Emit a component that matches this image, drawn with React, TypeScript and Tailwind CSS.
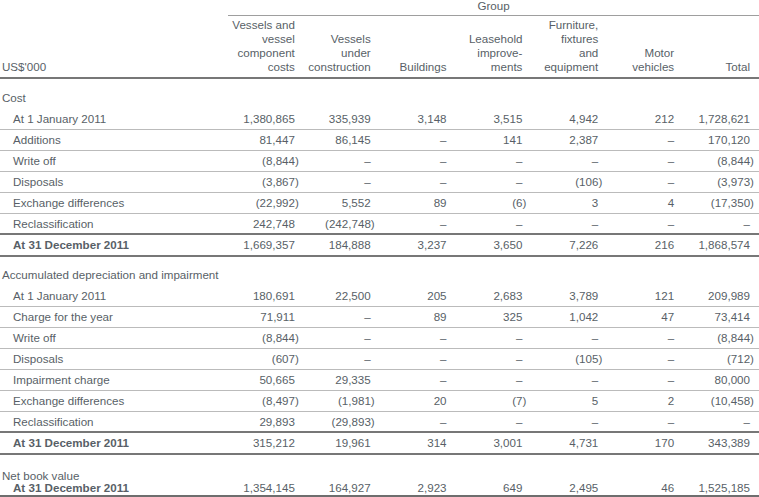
const grid = "grid grid-cols-[228px_repeat(7,minmax(0,1fr))]";

const cost: [string, string[]][] = [
  ["At 1 January 2011", ["1,380,865", "335,939", "3,148", "3,515", "4,942", "212", "1,728,621"]],
  ["Additions", ["81,447", "86,145", "–", "141", "2,387", "–", "170,120"]],
  ["Write off", ["(8,844)", "–", "–", "–", "–", "–", "(8,844)"]],
  ["Disposals", ["(3,867)", "–", "–", "–", "(106)", "–", "(3,973)"]],
  ["Exchange differences", ["(22,992)", "5,552", "89", "(6)", "3", "4", "(17,350)"]],
  ["Reclassification", ["242,748", "(242,748)", "–", "–", "–", "–", "–"]],
];
const costTotal = ["1,669,357", "184,888", "3,237", "3,650", "7,226", "216", "1,868,574"];

const depreciation: [string, string[]][] = [
  ["At 1 January 2011", ["180,691", "22,500", "205", "2,683", "3,789", "121", "209,989"]],
  ["Charge for the year", ["71,911", "–", "89", "325", "1,042", "47", "73,414"]],
  ["Write off", ["(8,844)", "–", "–", "–", "–", "–", "(8,844)"]],
  ["Disposals", ["(607)", "–", "–", "–", "(105)", "–", "(712)"]],
  ["Impairment charge", ["50,665", "29,335", "–", "–", "–", "–", "80,000"]],
  ["Exchange differences", ["(8,497)", "(1,981)", "20", "(7)", "5", "2", "(10,458)"]],
  ["Reclassification", ["29,893", "(29,893)", "–", "–", "–", "–", "–"]],
];
const depTotal = ["315,212", "19,961", "314", "3,001", "4,731", "170", "343,389"];

const nbv = ["1,354,145", "164,927", "2,923", "649", "2,495", "46", "1,525,185"];

const headers = [
  ["Vessels and", "vessel", "component", "costs"],
  ["Vessels", "under", "construction"],
  ["Buildings"],
  ["Leasehold", "improve-", "ments"],
  ["Furniture,", "fixtures", "and", "equipment"],
  ["Motor", "vehicles"],
  ["Total"],
];

function Num({ v }: { v: string }) {
  // closing bracket hangs past the column edge
  return <span className={v.startsWith("(") ? "-mr-[4px]" : ""}>{v}</span>;
}

function Values({ values }: { values: string[] }) {
  return (
    <>
      {values.map((v, i) => (
        <div key={i} className="text-right pr-[9px] whitespace-nowrap">
          <Num v={v} />
        </div>
      ))}
    </>
  );
}

function Row({ label, values, dark }: { label: string; values: string[]; dark?: boolean }) {
  return (
    <div
      className={`${grid} h-[21px] items-center ${
        dark ? "border-b-2 border-[#777777]" : "border-b border-[#bbbbbb]"
      }`}
    >
      <div className="pl-[13px]">{label}</div>
      <Values values={values} />
    </div>
  );
}

function TotalRow({ values }: { values: string[] }) {
  return (
    <div className={`${grid} h-[22px] items-center border-b-2 border-[#777777]`}>
      <div className="pl-[13px] font-bold">At 31 December 2011</div>
      <Values values={values} />
    </div>
  );
}

export default function App() {
  return (
    <div className="w-[759px] h-[497px] overflow-hidden bg-white text-[#585f67] text-[11.6px] leading-[14px] font-['Liberation_Sans',Arial,sans-serif]">
      <div className={`${grid} h-[16px]`}>
        <div />
        <div className="col-span-7 border-b border-[#9e9e9e] text-center leading-[11px]">Group</div>
      </div>
      <div className={`${grid} h-[63px] items-end pb-[3px] border-b-2 border-[#777777]`}>
        <div className="pl-[2px]">US$'000</div>
        {headers.map((lines, i) => (
          <div key={i} className="text-right pr-[9px] whitespace-nowrap">
            {lines.map((l, j) => (
              <div key={j}>{l}</div>
            ))}
          </div>
        ))}
      </div>

      <div className="h-[30px] flex items-end pb-[4px] pl-[2px]">Cost</div>
      {cost.map(([label, values], i) => (
        <Row key={i} label={label} values={values} dark={i === cost.length - 1} />
      ))}
      <TotalRow values={costTotal} />

      <div className="h-[29px] flex items-end pb-[4px] pl-[2px]">Accumulated depreciation and impairment</div>
      {depreciation.map(([label, values], i) => (
        <Row key={i} label={label} values={values} dark={i === depreciation.length - 1} />
      ))}
      <TotalRow values={depTotal} />

      <div className="pt-[15px] border-b-4 border-[#6e6e6e]">
        <div className="pl-[2px] leading-[12px]">Net book value</div>
        <div className={`${grid} leading-[12px] pb-[1px]`}>
          <div className="pl-[13px] font-bold">At 31 December 2011</div>
          <Values values={nbv} />
        </div>
      </div>
    </div>
  );
}
